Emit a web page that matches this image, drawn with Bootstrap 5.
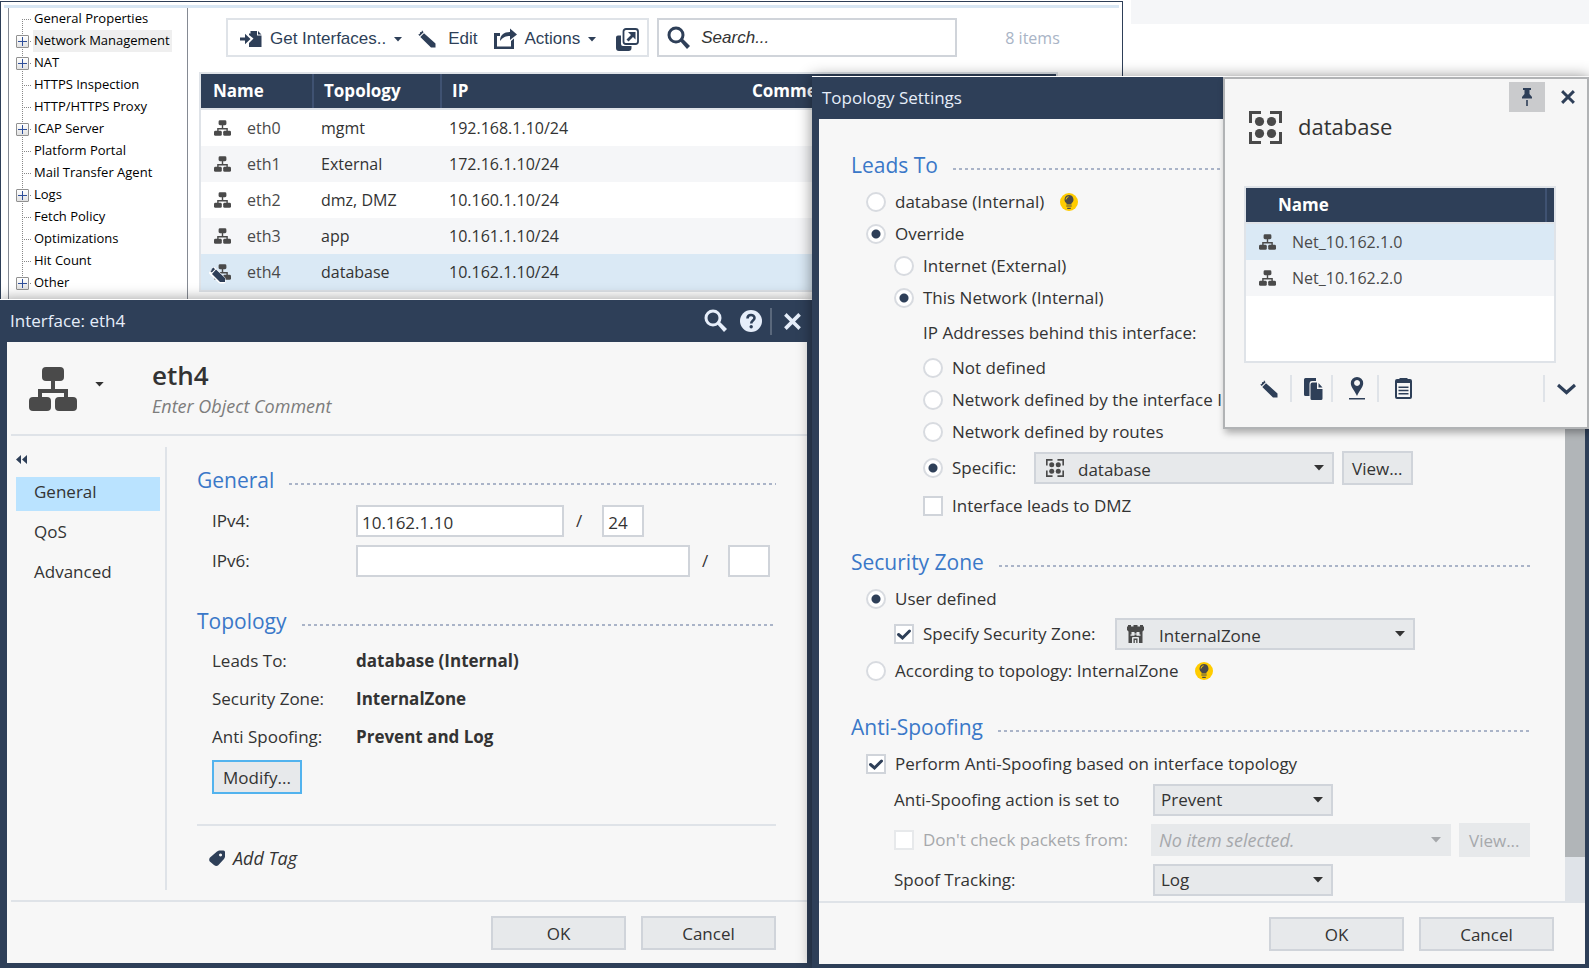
<!DOCTYPE html>
<html lang="en">
<head>
<meta charset="utf-8">
<meta name="viewport" content="width=device-width, initial-scale=1">
<title>Topology Settings</title>
<link href="https://cdn.jsdelivr.net/npm/bootstrap@5.3.0/dist/css/bootstrap.min.css" rel="stylesheet">
<style>
:root { --navy:#2e3f58; --line:#dfe3e8; --edge:#d0d4da; --ink:#333; --panel:#f7f7f7; --fill:#e7e9eb; --blue:#3a78c8; }
body { font:16px/24px "Open Sans","Noto Sans",sans-serif; color:var(--ink); background:#fff; }
svg { display:block; fill:currentColor; flex:none; }
button { font:inherit; color:inherit; }
.plain { background:none; border:0; padding:0; }
.desktop { display:grid; grid-template-columns:812fr 777fr; grid-template-rows:76px 223px 1fr; min-height:100vh; overflow:hidden; }
.far-strip { grid-area:1/2/2/3; width:59%; height:24px; justify-self:end; background:#f5f6f8; }

/* gateway window at the back */
.gateway { grid-area:1/1/4/3; width:71%; max-width:1123px; margin-top:1px; border:1px solid var(--navy); border-bottom:0; background:#fff; }
.ribbon { height:3px; margin:3px 3px 0; background:#d8e6f3; }
.tree { width:180px; margin-left:7px; border:solid #858a93; border-width:0 1px; font:13px/20px "Open Sans","Noto Sans",sans-serif; color:#000; }
.tree ul { position:relative; }
.tree ul::before { content:""; position:absolute; left:13px; top:11px; bottom:12px; border-left:1px dotted #888; }
.tree li { position:relative; height:22px; padding-left:24px; }
.tree li::before { content:""; position:absolute; left:13px; top:11px; width:9px; border-top:1px dotted #888; }
.tree a { display:inline-block; height:22px; padding:0 2px 0 1px; color:inherit; text-decoration:none; white-space:nowrap; }
.tree a.current { background:#efefef; }
.toggle { position:absolute; left:7px; top:5px; width:13px; height:13px; padding:0; border:1px solid #919191; border-radius:1px; background:linear-gradient(#2f4f9a,#2f4f9a) center/9px 1px no-repeat,linear-gradient(#2f4f9a,#2f4f9a) center/1px 9px no-repeat,linear-gradient(#fff,#e2e2e2); }
.gateway-main { padding:0 64px 0 11px; min-width:0; }
.toolrow { padding:10px 0 15px 27px; white-space:nowrap; }
.tools { height:39px; padding-top:3px; border:2px solid var(--line); color:var(--navy); font:17px/24px "Liberation Sans",Arial,sans-serif; flex:none; }
.finder { width:300px; height:39px; border:2px solid var(--edge); color:var(--navy); flex:none; }
.finder input { font:italic 17px/24px "Liberation Sans",Arial,sans-serif; border:0; outline:0; color:var(--ink); background:none; min-width:0; }
.finder input::placeholder { color:var(--ink); opacity:1; }
.tally { color:#a9b4c6; }
.grid-table { table-layout:fixed; width:100%; border-collapse:separate; border-spacing:0; }
.grid-table th { height:36px; padding:0 0 0 12px; border-bottom:2px solid var(--line); background:linear-gradient(#3f5272,#3f5272) left/2px 100% no-repeat var(--navy); color:#fff; font-size:17px; font-weight:700; }
.grid-table th:first-child, .grid-table th.joined { background:var(--navy); }
.grid-table td { height:36px; padding:0 0 0 9px; }
.grid-table td:first-child { padding-left:13px; color:#4a4a4a; }
.grid-table tbody tr:nth-child(even) { background:#f5f6f8; }
.grid-table tbody tr.picked { background:#dae9f5; }
.frame { border:2px solid var(--line); }

/* dialog windows */
.win { border:solid var(--navy); border-width:0 5px 5px 7px; position:relative; background:var(--panel); box-shadow:0 -1px 0 #fff,0 0 14px rgba(0,0,0,.45); display:flex; flex-direction:column; min-width:0; font-size:17px; }
.win-iface { grid-area:3/1/4/2; margin-top:1px; }
.win-topo { grid-area:2/2/4/3; margin-top:1px; border-width:0 4px 4px 7px; }
.titlebar { height:42px; background:var(--navy); color:#e6eefa; padding:0 6px 0 3px; flex:none; }
.rule { height:2px; background:var(--line); flex:none; }
.heading { height:32px; font-size:21px; line-height:30px; font-weight:400; color:var(--blue); margin:22px 0 5px; display:flex; align-items:center; gap:15px; white-space:nowrap; }
.heading:first-child { margin-top:0; }
.heading::after { content:""; flex:1; height:2px; margin-top:7px; background:repeating-linear-gradient(90deg,#aab4c8 0 3px,transparent 3px 6px); }
.obj-head { height:92px; padding:17px 22px 0; }
.obj-caret { margin:0 48px 0 18px; padding-bottom:24px; }
.obj-name { font-size:26px; line-height:32px; font-weight:600; margin:0; }
.ghost { color:#7d7d7d; font-size:18px; line-height:30px; font-style:italic; border:0; background:none; padding:0; outline:0; }
.ghost::placeholder { color:#7d7d7d; opacity:1; }
.side { width:158px; padding:19px 5px 0 9px; flex:none; }
.side a { display:block; height:34px; line-height:30px; padding-left:18px; margin-bottom:6px; color:inherit; text-decoration:none; }
.side a.active { background:#bae3ff; }
.collapse-btn { margin-bottom:13px; }
.split { width:2px; background:var(--line); margin:11px 0 10px; flex:none; }
.fields { padding:28px 31px 0 30px; }
.inset { padding-left:15px; }
.box { height:32px; border:2px solid var(--edge); background:#fff; padding:2px 4px 0; color:var(--ink); outline:0; }
.caption { width:144px; flex:none; }
.pair { height:38px; display:flex; align-items:center; }
.push { background:var(--fill); border:2px solid var(--edge); height:34px; padding:2px 8px 0; border-radius:0; line-height:24px; white-space:nowrap; }
.push.wide { width:135px; }
.push.focus-edge { border-color:#52b3ee; margin-top:4px; padding:2px 9px 0; }
.push:disabled { color:#a6a8ab; border-color:var(--fill); }
.footer-bar { height:61px; padding:14px 31px 0 0; display:flex; justify-content:flex-end; gap:15px; flex:none; }
.tagline { font-size:18px; }

.topo-form { padding:30px 33px 0 32px; }
.row-line { height:32px; display:flex; align-items:center; white-space:nowrap; }
.row-36 { height:36px; } .row-38 { height:38px; } .row-40 { height:40px; }
.in-1 { padding-left:15px; } .in-2 { padding-left:43px; } .in-3 { padding-left:72px; }
.tick { appearance:none; width:20px; height:20px; margin:0 9px 0 0; border:2px solid var(--edge); background:#fff center no-repeat; flex:none; }
.tick[type=radio] { border-radius:50%; border-color:#d8dbe0; }
.tick[type=radio]:checked { background-image:radial-gradient(circle,#2e3f58 0 4px,transparent 5px); }
.tick[type=checkbox]:checked { background-image:url("data:image/svg+xml,%3Csvg xmlns='http://www.w3.org/2000/svg' width='16' height='16'%3E%3Cpath d='M2.500 8.500l4 3.500L13.500 5' fill='none' stroke='%232e3f58' stroke-width='3' stroke-linecap='round'/%3E%3C/svg%3E"); }
.tick:disabled { border-color:#e7e9eb; }
.pick { appearance:none; height:32px; border:2px solid var(--edge); background:var(--fill) right 8px center/10px 6px no-repeat url("data:image/svg+xml,%3Csvg xmlns='http://www.w3.org/2000/svg' viewBox='0 0 10 6'%3E%3Cpath d='M0 0h10L5 5.5z' fill='%23333'/%3E%3C/svg%3E"); color:var(--ink); padding:0 24px 0 6px; border-radius:0; line-height:24px; outline:0; }
.pick:disabled { border-color:var(--fill); color:#a6a8ab; font-size:18px; font-style:italic; opacity:1; background-image:url("data:image/svg+xml,%3Csvg xmlns='http://www.w3.org/2000/svg' viewBox='0 0 10 6'%3E%3Cpath d='M0 0h10L5 5.5z' fill='%23a6a8ab'/%3E%3C/svg%3E"); }
.pick-long { width:300px; } .pick-short { width:180px; }
.pick-icon { position:relative; color:#4a4a4a; }
.pick-icon svg { position:absolute; left:12px; top:7px; }
.pick-icon select { padding:3px 24px 0 42px; }
.lab-specific { width:82px; } .lab-zone { width:192px; } .lab-wide { width:259px; } .lab-packets { width:228px; }
.rail { width:20px; background:var(--line); flex:none; }
.rail div { height:calc(100% - 44px); background:#b1b5b8; }
.faded { color:#a6a8ab; }

.popup-card { position:absolute; top:0; right:-4px; width:366px; height:352px; border:2px solid #b1b3b5; background:#f6f6f6; box-shadow:2px 4px 7px rgba(0,0,0,.3); font-size:16px; }
.popup-top { height:33px; padding:3px 12px 0 0; }
.popup-head { height:30px; margin-bottom:44px; }
.pin { width:36px; height:30px; background:#cacbcd; border:0; padding:0; color:var(--navy); }
.popup-name { font-size:22px; line-height:30px; font-weight:400; margin:0; padding-bottom:2px; }
.popup-card .frame { margin:0 31px 0 19px; height:177px; background:#fff; }
.popup-tools { padding:12px 11px 0 35px; color:var(--navy); }
.vbar { width:2px; height:27px; background:var(--line); flex:none; }
</style>
</head>
<body>
<svg width="0" height="0" class="position-absolute" aria-hidden="true">
  <symbol id="net" viewBox="0 0 48 44"><rect x="13" y="0" width="22" height="14" rx="4"/><rect x="0" y="30" width="22" height="14" rx="4"/><rect x="26" y="30" width="22" height="14" rx="4"/><path d="M22 12h4v10h13v10h-4v-6H13v6H9V22h13z"/></symbol>
  <symbol id="pencil" viewBox="0 0 18 18"><path d="M6 3.200L17.500 13.500v4H13L2.300 7zM4 .3l1.600 1.900-3.900 3.800L.2 4.400l1.600-.5.200-1.700 1.600-.2z"/></symbol>
  <symbol id="group" viewBox="0 0 33 33"><path d="M0 0h12v3H3v9H0zM21 0h12v12h-3V3h-9zM0 21h3v9h9v3H0zM30 21h3v12H21v-3h9z"/><circle cx="10.500" cy="10.500" r="4.600"/><circle cx="22.500" cy="10.500" r="4.600"/><circle cx="10.500" cy="22.500" r="4.600"/><circle cx="22.500" cy="22.500" r="4.600"/></symbol>
  <symbol id="lens" viewBox="0 0 24 24"><circle cx="9" cy="9" r="7" fill="none" stroke="currentColor" stroke-width="3"/><path d="M13 15l2.500-2.500 7.500 7.500-3 3z"/></symbol>
  <symbol id="cross" viewBox="0 0 16 16"><path d="M2.500 2.500l11 11M13.500 2.500l-11 11" stroke="currentColor" stroke-width="3.400" stroke-linecap="square"/></symbol>
  <symbol id="caret" viewBox="0 0 10 6"><path d="M0 0h10L5 5.500z"/></symbol>
  <symbol id="bulb" viewBox="0 0 18 18"><circle cx="9" cy="9" r="9" fill="#fc0"/><path d="M9 2a4.500 4.500 0 0 1 2.500 8.200V11.500h-5V10.200A4.500 4.500 0 0 1 9 2zM6.300 12.400h5.400v1.200H6.300zM7.200 14.800h3.600v1.200H7.200z" fill="#4a4a4a"/><path d="M6 6.500A3 3 0 0 1 8.500 3.700" stroke="#fc0" fill="none"/></symbol>
</svg>

<main class="desktop">
  <div class="far-strip"></div>

  <section class="gateway" aria-label="Gateway properties">
    <div class="ribbon"></div>
    <div class="d-flex">
      <nav class="tree flex-shrink-0 mb-5" aria-label="Categories">
        <ul class="list-unstyled mb-5">
          <li><a href="#">General Properties</a></li>
          <li><button class="toggle" aria-label="Expand"></button><a href="#" class="current">Network Management</a></li>
          <li><button class="toggle" aria-label="Expand"></button><a href="#">NAT</a></li>
          <li><a href="#">HTTPS Inspection</a></li>
          <li><a href="#">HTTP/HTTPS Proxy</a></li>
          <li><button class="toggle" aria-label="Expand"></button><a href="#">ICAP Server</a></li>
          <li><a href="#">Platform Portal</a></li>
          <li><a href="#">Mail Transfer Agent</a></li>
          <li><button class="toggle" aria-label="Expand"></button><a href="#">Logs</a></li>
          <li><a href="#">Fetch Policy</a></li>
          <li><a href="#">Optimizations</a></li>
          <li><a href="#">Hit Count</a></li>
          <li><button class="toggle" aria-label="Expand"></button><a href="#">Other</a></li>
        </ul>
      </nav>
      <div class="gateway-main flex-grow-1">
        <div class="toolrow d-flex align-items-center">
          <div class="tools d-flex align-items-center">
            <button class="plain d-flex align-items-center ms-2 ps-1"><svg width="22" height="18" viewBox="0 0 22 18"><path d="M9 5V3.500h1.500V1H17v4.500h4.500V17H9v-4l4.500-4.500zM18 1l3.500 3.500H18z"/><path d="M0 7.500h5V3.800L10.500 9 5 14.200v-3.700H0z"/></svg><span class="ms-2">Get Interfaces..</span><svg class="ms-2" width="8" height="5"><use href="#caret"/></svg></button>
            <button class="plain d-flex align-items-center ms-3"><svg width="18" height="18"><use href="#pencil"/></svg><span class="ms-2 ps-1">Edit</span></button>
            <button class="plain d-flex align-items-center ms-3"><svg width="23" height="22" viewBox="0 0 23 22"><path d="M0 5h6v3H3v10.500h14V13l3-2.500V21H0z"/><path d="M6 13c0-6 4-9 10-9V.5l7 6L16 12V8c-4 0-7 1-10 5z"/></svg><span class="ms-2">Actions</span><svg class="ms-2" width="8" height="5"><use href="#caret"/></svg></button>
            <button class="plain ms-3 ps-1 me-2" aria-label="Open in new window"><svg width="23" height="23" viewBox="0 0 23 23"><path d="M0 9.500Q0 7.500 2 7.500H5v8.500q0 2 2 2h8.500v2q0 3-3 3H3q-3 0-3-3z"/><rect x="7.500" y="1" width="14.500" height="15" rx="2.500" fill="none" stroke="currentColor" stroke-width="1.800"/><path d="M12 4h7.500v7.500L17 9l-4.500 4.500-2-2L15 7z"/></svg></button>
          </div>
          <label class="finder d-flex align-items-center gap-2 ms-2 ps-2"><svg width="24" height="24"><use href="#lens"/></svg><input type="text" class="flex-grow-1 py-0" placeholder="Search..." aria-label="Search"></label>
          <span class="tally ms-5">8 items</span>
        </div>
        <div class="frame">
          <table class="grid-table">
            <colgroup><col style="width:111px"><col style="width:128px"><col style="width:300px"><col></colgroup>
            <thead><tr><th>Name</th><th>Topology</th><th>IP</th><th class="joined">Comments</th></tr></thead>
            <tbody>
              <tr><td><span class="d-flex align-items-center gap-3"><svg width="17" height="16"><use href="#net"/></svg>eth0</span></td><td>mgmt</td><td>192.168.1.10/24</td><td></td></tr>
              <tr><td><span class="d-flex align-items-center gap-3"><svg width="17" height="16"><use href="#net"/></svg>eth1</span></td><td>External</td><td>172.16.1.10/24</td><td></td></tr>
              <tr><td><span class="d-flex align-items-center gap-3"><svg width="17" height="16"><use href="#net"/></svg>eth2</span></td><td>dmz, DMZ</td><td>10.160.1.10/24</td><td></td></tr>
              <tr><td><span class="d-flex align-items-center gap-3"><svg width="17" height="16"><use href="#net"/></svg>eth3</span></td><td>app</td><td>10.161.1.10/24</td><td></td></tr>
              <tr class="picked"><td><span class="d-flex align-items-center gap-3"><svg width="17" height="16" viewBox="0 0 17 16" overflow="visible"><use href="#net" width="17" height="16"/><path d="M0 4.500L10 14.500v3.500H6L-3.500 9z" fill="#fff" stroke="#fff" stroke-width="3" stroke-linejoin="round"/><path d="M2 5.500L11 14v4H6L-2 10zM-.5 3.500l1.500 1.700-3.200 3.400-1.600-1.600 1.300-.6.200-1.500z" fill="#2e3f58"/></svg>eth4</span></td><td>database</td><td>10.162.1.10/24</td><td></td></tr>
            </tbody>
          </table>
        </div>
      </div>
    </div>
  </section>

  <section class="win win-iface" aria-label="Interface: eth4">
    <header class="titlebar d-flex align-items-center">
      <span class="flex-grow-1">Interface: eth4</span>
      <button class="plain" aria-label="Search"><svg width="24" height="24"><use href="#lens"/></svg></button>
      <button class="plain ms-2 ps-1" aria-label="Help"><svg width="22" height="22" viewBox="0 0 22 22"><circle cx="11" cy="11" r="11"/><path d="M7.500 8.500C7.500 3.800 14.500 4 14.500 8c0 2.600-3.300 2.500-3.300 5.500" fill="none" stroke="#2e3f58" stroke-width="2.600"/><circle cx="11.200" cy="16.800" r="1.700" fill="#2e3f58"/></svg></button>
      <span class="vbar ms-2 opacity-25"></span>
      <button class="plain ms-2 ps-1" aria-label="Close"><svg width="17" height="17"><use href="#cross"/></svg></button>
    </header>
    <div class="obj-head d-flex">
      <svg class="mt-2" width="48" height="44" color="#4a4a4a"><use href="#net"/></svg>
      <button class="plain obj-caret" aria-label="Change icon"><svg width="9" height="5"><use href="#caret"/></svg></button>
      <div class="flex-grow-1">
        <h1 class="obj-name">eth4</h1>
        <input class="ghost w-100" placeholder="Enter Object Comment" aria-label="Object comment">
      </div>
    </div>
    <div class="rule ms-1"></div>
    <div class="d-flex flex-grow-1">
      <nav class="side" aria-label="Pages">
        <button class="plain d-block collapse-btn" aria-label="Collapse"><svg width="11" height="9" viewBox="0 0 11 9" color="#2e3f58"><path d="M5 0v9L0 4.500zM11 0v9L6 4.500z"/></svg></button>
        <a href="#" class="active">General</a><a href="#">QoS</a><a href="#">Advanced</a>
      </nav>
      <div class="split"></div>
      <form class="fields flex-grow-1">
        <h2 class="heading">General</h2>
        <div class="inset pt-1">
          <div class="d-flex align-items-center mb-2"><label class="caption" for="v4">IPv4:</label><input id="v4" class="box" style="width:208px" value="10.162.1.10"><span class="px-2 mx-1">/</span><input class="box ms-2" style="width:42px" value="24" aria-label="IPv4 mask"></div>
          <div class="d-flex align-items-center"><label class="caption" for="v6">IPv6:</label><input id="v6" class="box" style="width:334px"><span class="px-2 mx-1">/</span><input class="box ms-2" style="width:42px" aria-label="IPv6 mask"></div>
        </div>
        <h2 class="heading" style="margin-top:28px">Topology</h2>
        <div class="inset">
          <div class="pair"><span class="caption">Leads To:</span><b>database (Internal)</b></div>
          <div class="pair"><span class="caption">Security Zone:</span><b>InternalZone</b></div>
          <div class="pair"><span class="caption">Anti Spoofing:</span><b>Prevent and Log</b></div>
          <button type="button" class="push focus-edge">Modify...</button>
        </div>
        <div class="rule" style="margin:30px 0 16px"></div>
        <button type="button" class="tagline plain d-flex align-items-center gap-2 fst-italic ms-2 ps-1 pt-1"><svg width="16" height="16" viewBox="0 0 16 16" color="#2e3f58"><path fill-rule="evenodd" d="M8 1.500L10 .5h4.500q1.500 0 1.500 1.500V7l-1 2-6 6.500q-2 1-4-.5L.8 11.500Q-.5 9.500 1 7.500zM11.500 3.500a1.500 1.500 0 1 0 .1 0z"/></svg>Add Tag</button>
      </form>
    </div>
    <div class="rule ms-1"></div>
    <footer class="footer-bar"><button class="push wide">OK</button><button class="push wide">Cancel</button></footer>
  </section>

  <section class="win win-topo" aria-label="Topology Settings">
    <header class="titlebar d-flex align-items-center">Topology Settings</header>
    <div class="d-flex flex-grow-1">
      <form class="topo-form flex-grow-1">
        <h2 class="heading">Leads To</h2>
        <div class="row-line in-1"><input class="tick" type="radio" name="leads" id="r1"><label for="r1">database (Internal)</label><svg class="ms-3" width="18" height="18"><use href="#bulb"/></svg></div>
        <div class="row-line in-1"><input class="tick" type="radio" name="leads" id="r2" checked><label for="r2">Override</label></div>
        <div class="row-line in-2"><input class="tick" type="radio" name="over" id="r3"><label for="r3">Internet (External)</label></div>
        <div class="row-line in-2"><input class="tick" type="radio" name="over" id="r4" checked><label for="r4">This Network (Internal)</label></div>
        <div class="row-line row-38 in-3">IP Addresses behind this interface:</div>
        <div class="row-line in-3"><input class="tick" type="radio" name="ips" id="r5"><label for="r5">Not defined</label></div>
        <div class="row-line in-3"><input class="tick" type="radio" name="ips" id="r6"><label for="r6">Network defined by the interface IP</label></div>
        <div class="row-line in-3"><input class="tick" type="radio" name="ips" id="r7"><label for="r7">Network defined by routes</label></div>
        <div class="row-line row-40 in-3"><input class="tick" type="radio" name="ips" id="r8" checked><label for="r8" class="lab-specific">Specific:</label><span class="pick-icon"><svg width="18" height="18"><use href="#group"/></svg><select class="pick pick-long" aria-label="Specific network"><option>database</option></select></span><button type="button" class="push ms-2">View...</button></div>
        <div class="row-line row-36 in-3"><input class="tick" type="checkbox" id="c1"><label for="c1">Interface leads to DMZ</label></div>
        <h2 class="heading">Security Zone</h2>
        <div class="row-line in-1"><input class="tick" type="radio" name="zone" id="r9" checked><label for="r9">User defined</label></div>
        <div class="row-line row-38 in-2"><input class="tick" type="checkbox" id="c2" checked><label for="c2" class="lab-zone">Specify Security Zone:</label><span class="pick-icon"><svg width="17" height="18" viewBox="0 0 17 18"><path fill-rule="evenodd" d="M1 0h3v1.500h2.500V0h4v1.500H13V0h3v1.500h1V5l-1.500 1.500V18H12v-5q0-1-1-1H6q-1 0-1 1v5H1.500V6.500L0 5V1.500h1zM4.500 7v2.500H3.500v1.200H7.500V9.500h2v1.200h4V9.500h-1V7z"/><path d="M7.500 6h2v2.500h-2zM6.500 13.500h4V18h-1.300v-3H7.800v3H6.500z"/></svg><select class="pick pick-long" aria-label="Security zone"><option>InternalZone</option></select></span></div>
        <div class="row-line row-36 in-1"><input class="tick" type="radio" name="zone" id="r10"><label for="r10">According to topology: InternalZone</label><svg class="ms-3" width="18" height="18"><use href="#bulb"/></svg></div>
        <h2 class="heading">Anti-Spoofing</h2>
        <div class="row-line in-1"><input class="tick" type="checkbox" id="c3" checked><label for="c3">Perform Anti-Spoofing based on interface topology</label></div>
        <div class="row-line row-40 in-2"><label for="s3" class="lab-wide">Anti-Spoofing action is set to</label><select id="s3" class="pick pick-short"><option>Prevent</option></select></div>
        <div class="row-line row-40 in-2"><input class="tick" type="checkbox" id="c4" disabled><label for="c4" class="faded lab-packets">Don't check packets from:</label><select class="pick pick-long" disabled aria-label="Excluded packets"><option>No item selected.</option></select><button type="button" class="push ms-2" disabled>View...</button></div>
        <div class="row-line row-40 in-2"><label for="s5" class="lab-wide">Spoof Tracking:</label><select id="s5" class="pick pick-short"><option>Log</option></select></div>
      </form>
      <div class="rail"><div></div></div>
    </div>
    <div class="rule"></div>
    <footer class="footer-bar"><button class="push wide">OK</button><button class="push wide">Cancel</button></footer>

    <aside class="popup-card" aria-label="database">
      <div class="popup-top d-flex justify-content-end align-items-center">
        <button class="pin" aria-label="Pin"><svg class="mx-auto" width="10" height="18" viewBox="0 0 10 18"><path d="M1 0h8v2H7.500v4L10 9v1.500H0V9l2.500-3V2H1zM4.200 12h1.600v6H4.200z"/></svg></button>
        <button class="plain ms-3" aria-label="Close"><svg width="14" height="14" color="#2e3f58"><use href="#cross"/></svg></button>
      </div>
      <div class="popup-head d-flex align-items-center gap-3 ps-4"><svg width="33" height="33" color="#4a4a4a"><use href="#group"/></svg><h2 class="popup-name">database</h2></div>
      <div class="frame">
        <table class="grid-table">
          <colgroup><col><col style="width:9px"></colgroup>
          <thead><tr><th class="ps-4"><span class="ps-2">Name</span></th><th class="p-0"></th></tr></thead>
          <tbody>
            <tr class="picked"><td colspan="2"><span class="d-flex align-items-center gap-3"><svg width="17" height="16"><use href="#net"/></svg>Net_10.162.1.0</span></td></tr>
            <tr><td colspan="2"><span class="d-flex align-items-center gap-3"><svg width="17" height="16"><use href="#net"/></svg>Net_10.162.2.0</span></td></tr>
          </tbody>
        </table>
      </div>
      <div class="popup-tools d-flex align-items-center">
        <button class="plain pe-1" aria-label="Edit"><svg width="18" height="18"><use href="#pencil"/></svg></button>
        <span class="vbar mx-2"></span>
        <button class="plain ms-1" aria-label="Copy"><svg width="19" height="22" viewBox="0 0 19 22"><path d="M1.500 0H12v3H8Q5.500 3 5.500 6v12h-4Q0 18 0 16.500v-15Q0 0 1.500 0z"/><path d="M8.500 4.500H13V11h5.500v9.500q0 1.500-1.500 1.500H8q-1.500 0-1.500-1.500v-14q0-2 2-2zM14.500 5l4 4.500h-4z"/></svg></button>
        <span class="vbar mx-2"></span>
        <button class="plain ms-2 pe-1" aria-label="Locate"><svg width="16" height="23" viewBox="0 0 16 23"><path fill-rule="evenodd" d="M8 0a6.200 6.200 0 0 1 6.200 6.200C14.200 10 10 14 8 19 6 14 1.800 10 1.800 6.200A6.200 6.200 0 0 1 8 0zM8 3a3 3 0 1 0 .1 0zM0 21h16v1.500H0z"/></svg></button>
        <span class="vbar mx-2"></span>
        <button class="plain ms-1 flex-grow-1" aria-label="Clipboard"><svg class="ms-1" width="17" height="21" viewBox="0 0 17 21"><path fill-rule="evenodd" d="M4.500 0h8v1H15q2 0 2 2v16q0 2-2 2H2q-2 0-2-2V3q0-2 2-2h2.500zM2 5v14h13V5zM3.500 8.500h10V10h-10zM3.500 11.800h10v1.500h-10zM3.500 15h10v1.500h-10z"/></svg></button>
        <span class="vbar me-2 ms-auto"></span>
        <button class="plain ms-1" aria-label="More"><svg width="19" height="12" viewBox="0 0 19 12"><path d="M1 2l8.500 7.500L18 2" fill="none" stroke="currentColor" stroke-width="3.200"/></svg></button>
      </div>
    </aside>
  </section>
</main>
<script src="https://cdn.jsdelivr.net/npm/bootstrap@5.3.0/dist/js/bootstrap.bundle.min.js"></script>
</body>
</html>
